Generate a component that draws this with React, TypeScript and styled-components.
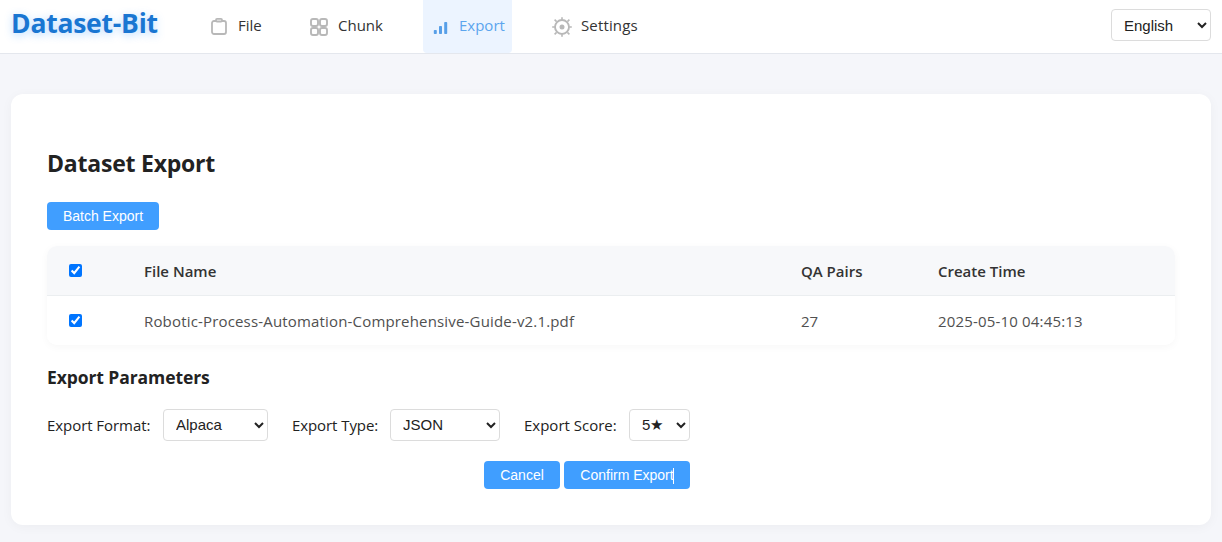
import React from "react";
import styled, { createGlobalStyle } from "styled-components";

const GlobalStyle = createGlobalStyle`
  * { box-sizing: border-box; }
  html, body { margin: 0; background: #f5f6fa; }
  body {
    height: 542px;
    overflow: hidden;
    font-family: "Open Sans", "Noto Sans", sans-serif;
    color: #222;
  }
`;

const Header = styled.header`
  display: flex;
  height: 54px;
  padding: 0 11px;
  background: #fff;
  border-bottom: 1px solid #e4e7ed;
`;

const Brand = styled.div`
  width: 190px;
  padding-top: 4px;
  font-size: 26.5px;
  font-weight: 700;
  line-height: 38px;
  letter-spacing: -0.24px;
  white-space: nowrap;
  color: #1976d2;
  text-shadow: 0 2px 8px rgba(64, 158, 255, 0.4);
`;

const Nav = styled.nav`
  display: flex;
  gap: 32px;
  flex: 1;
`;

const NavItem = styled.a<{ $width: number; $active?: boolean }>`
  display: flex;
  align-items: center;
  gap: ${(p) => (p.$active ? 8 : 9)}px;
  width: ${(p) => p.$width}px;
  height: 53px;
  padding: 0 8px;
  font-size: 15px;
  white-space: nowrap;
  border-radius: 0 0 4px 4px;
  color: ${(p) => (p.$active ? "#5ba5ee" : "#333")};
  background: ${(p) => (p.$active ? "#ecf4ff" : "transparent")};

  svg {
    flex: none;
    margin-top: 1px;
    color: ${(p) => (p.$active ? "#579fe8" : "#b8b8b8")};
  }
`;

const NavLabel = styled.span<{ $spacing: number }>`
  line-height: 20px;
  margin-top: -3px;
  letter-spacing: ${(p) => p.$spacing}px;
`;

const Select = styled.select<{ $width: number }>`
  width: ${(p) => p.$width}px;
  height: 32px;
  padding: 0 0 1px 8px;
  border: 1px solid #dcdcdc;
  border-radius: 4px;
  background-color: #fff;
  color: #222;
  font-family: "Liberation Sans", Arial, sans-serif;
  font-size: 15px;
`;

const LanguageSelect = styled(Select)`
  margin-top: 9px;
  padding-bottom: 0;
`;

const Card = styled.main`
  height: 431px;
  margin: 40px 11px 0;
  padding: 51px 36px 0;
  border-radius: 12px;
  background: #fff;
  box-shadow: 0 2px 12px rgba(0, 0, 0, 0.04);
`;

const Title = styled.h2`
  margin: 0 0 21px;
  font-size: 23px;
  font-weight: 700;
  line-height: 36px;
  letter-spacing: -0.22px;
`;

const Button = styled.button<{ $width: number }>`
  width: ${(p) => p.$width}px;
  height: 28px;
  padding: 0;
  border: 0;
  border-radius: 4px;
  background: #409eff;
  color: #fff;
  font-family: "Liberation Sans", Arial, sans-serif;
  font-size: 14px;
  line-height: 28px;
  white-space: nowrap;
`;

const Table = styled.div`
  height: 99px;
  margin-top: 16px;
  overflow: hidden;
  border-radius: 10px;
  box-shadow: 0 2px 8px rgba(0, 0, 0, 0.035);
`;

const Row = styled.div<{ $head?: boolean }>`
  display: grid;
  grid-template-columns: 97px 657px 137px 1fr;
  align-items: center;
  height: ${(p) => (p.$head ? 50 : 49)}px;
  font-size: 15px;
  font-weight: ${(p) => (p.$head ? 600 : 400)};
  color: ${(p) => (p.$head ? "#333" : "#505050")};
  background: ${(p) => (p.$head ? "#f7f8fa" : "#fff")};
  border-bottom: ${(p) => (p.$head ? "1px solid #ebeef0" : "0")};
`;

const Cell = styled.span<{ $spacing?: number }>`
  padding-top: 1px;
  letter-spacing: ${(p) => p.$spacing ?? 0}px;
`;

const Checkbox = styled.input`
  display: block;
  width: 13px;
  height: 13px;
  margin: 0 0 0 22px;
`;

const Subtitle = styled.h3`
  margin: 18px 0 18px;
  font-size: 17.5px;
  font-weight: 700;
  line-height: 28px;
  letter-spacing: -0.08px;
`;

const Parameters = styled.div`
  display: flex;
  gap: 24px;
`;

const Field = styled.label`
  display: flex;
  align-items: center;
  font-size: 15px;
`;

const FieldLabel = styled.span<{ $width: number; $spacing: number }>`
  width: ${(p) => p.$width}px;
  margin-top: -1px;
  white-space: nowrap;
  letter-spacing: ${(p) => p.$spacing}px;
`;

const Actions = styled.div`
  display: flex;
  justify-content: flex-end;
  gap: 4px;
  width: 643px;
  margin-top: 20px;
`;

const Caret = styled.i`
  display: inline-block;
  width: 1px;
  height: 16px;
  margin-left: -1px;
  vertical-align: middle;
  background: #fff;
`;

const ClipboardIcon = () => (
  <svg width="20" height="20" viewBox="0 0 20 20" fill="none" stroke="currentColor" strokeWidth="1.8">
    <rect x="3" y="4" width="14" height="13" rx="2" />
    <rect x="7" y="1.9" width="6" height="2.6" rx="1" fill="#fff" />
  </svg>
);

const GridIcon = () => (
  <svg width="20" height="20" viewBox="0 0 20 20" fill="none" stroke="currentColor" strokeWidth="1.9">
    <rect x="2" y="2" width="7" height="7" rx="2" />
    <rect x="11" y="2" width="7" height="7" rx="2" />
    <rect x="2" y="11" width="7" height="7" rx="2" />
    <rect x="11" y="11" width="7" height="7" rx="2" />
  </svg>
);

const BarsIcon = () => (
  <svg width="20" height="20" viewBox="0 0 20 20" fill="currentColor">
    <rect x="2.8" y="13" width="3" height="4" rx="0.8" />
    <rect x="8" y="9" width="3" height="8" rx="0.8" />
    <rect x="13.2" y="5" width="3" height="12" rx="0.8" />
  </svg>
);

const GearIcon = () => (
  <svg width="20" height="20" viewBox="0 0 20 20" fill="none" stroke="currentColor" strokeWidth="1.6">
    <circle cx="10" cy="10" r="7" strokeWidth="1.9" />
    <circle cx="10" cy="10" r="2.5" fill="currentColor" stroke="none" />
    <path d="M10 0.2v2.4M10 17.4v2.4M0.2 10h2.4M17.4 10h2.4M2.6 2.6l2 2M15.4 15.4l2 2M17.4 2.6l-2 2M4.6 15.4l-2 2" />
  </svg>
);

export default function App() {
  return (
    <>
      <GlobalStyle />
      <Header>
        <Brand>Dataset-Bit</Brand>
        <Nav>
          <NavItem $width={68}><ClipboardIcon /><NavLabel $spacing={0}>File</NavLabel></NavItem>
          <NavItem $width={90}><GridIcon /><NavLabel $spacing={0}>Chunk</NavLabel></NavItem>
          <NavItem $width={89} $active><BarsIcon /><NavLabel $spacing={0}>Export</NavLabel></NavItem>
          <NavItem $width={101}><GearIcon /><NavLabel $spacing={0.14}>Settings</NavLabel></NavItem>
        </Nav>
        <LanguageSelect $width={100} defaultValue="English"><option>English</option></LanguageSelect>
      </Header>
      <Card>
        <Title>Dataset Export</Title>
        <Button $width={112}>Batch Export</Button>
        <Table>
          <Row $head>
            <Checkbox type="checkbox" defaultChecked />
            <Cell>File Name</Cell>
            <Cell>QA Pairs</Cell>
            <Cell>Create Time</Cell>
          </Row>
          <Row>
            <Checkbox type="checkbox" defaultChecked />
            <Cell $spacing={0.17}>Robotic-Process-Automation-Comprehensive-Guide-v2.1.pdf</Cell>
            <Cell>27</Cell>
            <Cell $spacing={0.17}>2025-05-10 04:45:13</Cell>
          </Row>
        </Table>
        <Subtitle>Export Parameters</Subtitle>
        <Parameters>
          <Field>
            <FieldLabel $width={116} $spacing={-0.06}>Export Format:</FieldLabel>
            <Select $width={105} defaultValue="Alpaca"><option>Alpaca</option></Select>
          </Field>
          <Field>
            <FieldLabel $width={98} $spacing={-0.08}>Export Type:</FieldLabel>
            <Select $width={110} defaultValue="JSON"><option>JSON</option></Select>
          </Field>
          <Field>
            <FieldLabel $width={105} $spacing={0}>Export Score:</FieldLabel>
            <Select $width={61} defaultValue="5★"><option>5★</option></Select>
          </Field>
        </Parameters>
        <Actions>
          <Button $width={76}>Cancel</Button>
          <Button $width={126}>Confirm Export<Caret /></Button>
        </Actions>
      </Card>
    </>
  );
}
